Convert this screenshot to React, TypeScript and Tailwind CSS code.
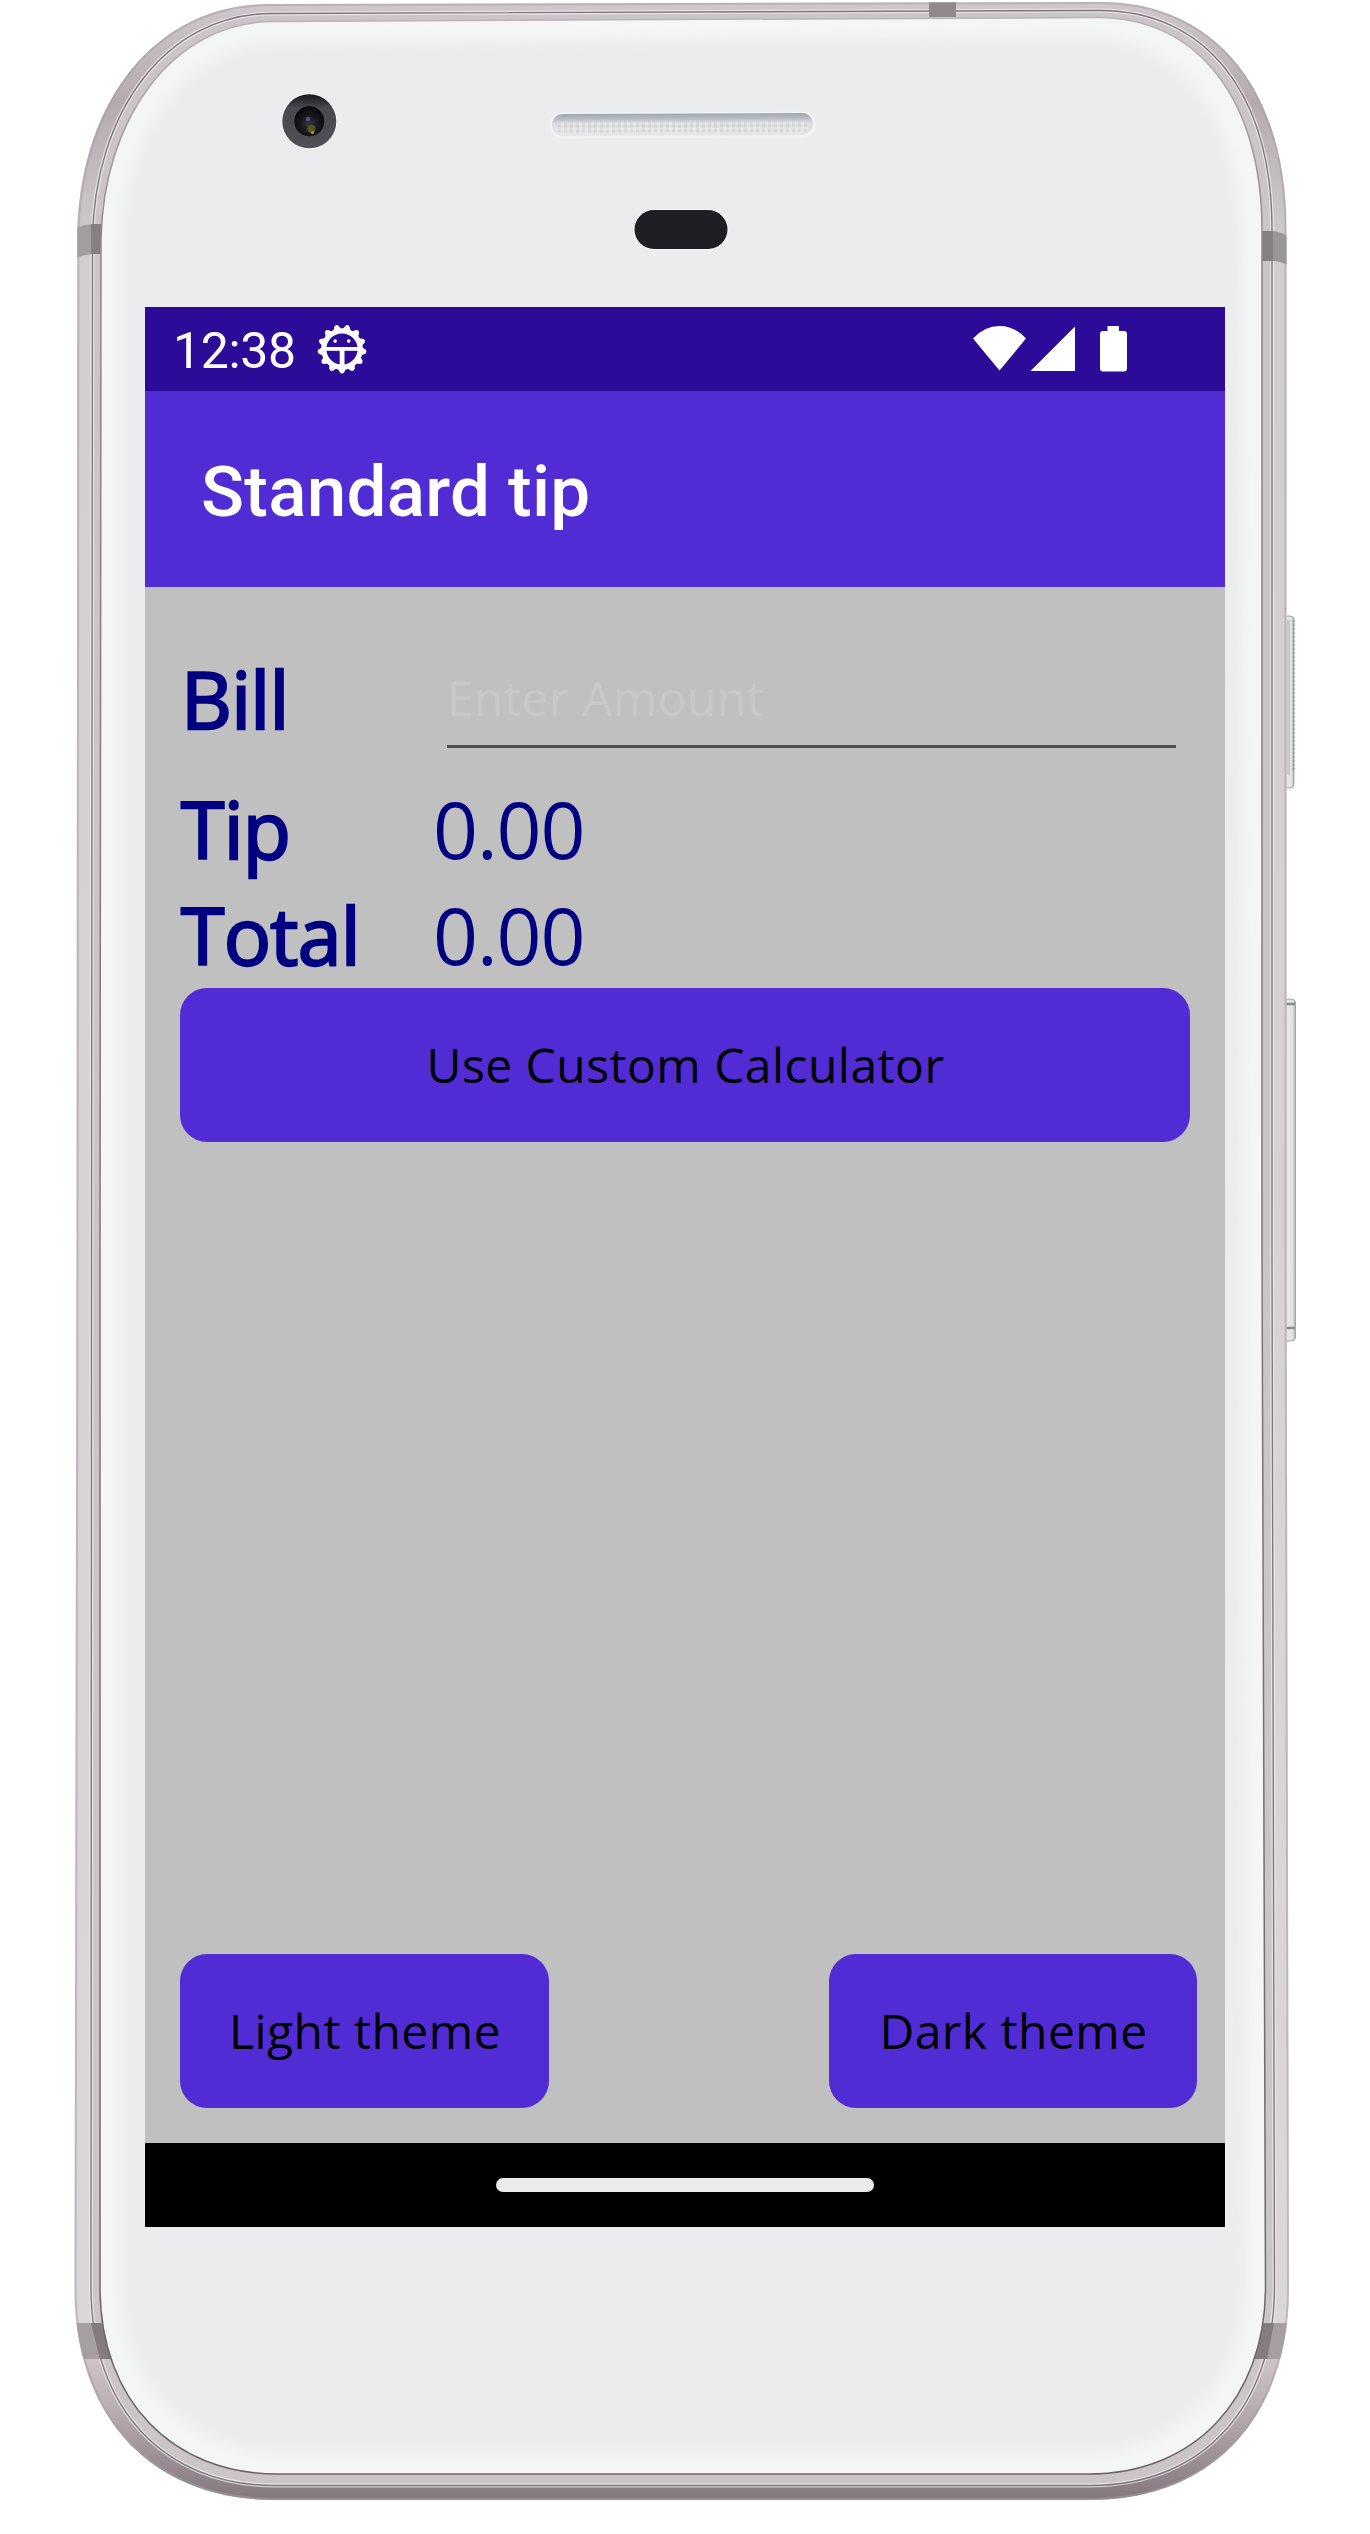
import React from "react";

const OUTER =
  "M77.3 240 C78 106 152 4 270 4 L1100 2 C1214 2 1286.5 88 1286.5 230 L1286.5 1250 L1289 2290 C1288 2416 1214 2500 1090 2500 L275 2500 C154 2500 75.5 2420 74.5 2290 L76.5 1250 Z";
const GROOVE =
  "M92.5 240 C94 112 166 13.5 272 13.5 L1100 10.5 C1206 10.5 1272 94 1272 230 L1272 1250 L1274.5 2290 C1273 2406 1204 2485.5 1090 2485.5 L275 2485.5 C164 2485.5 92 2408 91 2290 L91.5 1250 Z";
const GLASS =
  "M101 240 C103 120 172 21.5 274 21.5 L1098 17.5 C1198 17.5 1262 100 1262 230 L1262 1250 L1265.5 2290 C1264 2398 1196 2474 1088 2474 L277 2474 C172 2474 101 2400 100 2290 L100 1250 Z";
const GLASS_FLAT =
  "M120 250 C122 136 184 41 284 41 L1086 37 C1180 37 1241 116 1241 240 L1246 2290 C1243 2380 1182 2453 1082 2453 L286 2453 C188 2453 122 2384 120 2290 Z";

function PhoneBody() {
  return (
    <svg className="absolute inset-0 h-full w-full" viewBox="0 0 1370 2534" aria-hidden="true">
      <defs>
        <linearGradient id="metal" x1="0" y1="0" x2="0" y2="1">
          <stop offset="0" stopColor="#cfc8cc" />
          <stop offset="0.04" stopColor="#b3abaf" />
          <stop offset="0.1" stopColor="#d3ccd0" />
          <stop offset="0.5" stopColor="#d8d1d5" />
          <stop offset="0.93" stopColor="#dcd5d9" />
          <stop offset="0.965" stopColor="#b5abb0" />
          <stop offset="1" stopColor="#81777d" />
        </linearGradient>
        <linearGradient id="edge" x1="0" y1="0" x2="0" y2="1">
          <stop offset="0" stopColor="#bab4b7" />
          <stop offset="0.1" stopColor="#8b8488" />
          <stop offset="1" stopColor="#6b6468" />
        </linearGradient>
        <linearGradient id="keys" x1="0" y1="0" x2="1" y2="0">
          <stop offset="0" stopColor="#b9bdbb" />
          <stop offset="0.3" stopColor="#e6e9e6" />
          <stop offset="0.75" stopColor="#dfe3e0" />
          <stop offset="1" stopColor="#a9adab" />
        </linearGradient>
        <linearGradient id="grille" x1="0" y1="0" x2="0" y2="1">
          <stop offset="0" stopColor="#a2a6ae" />
          <stop offset="0.25" stopColor="#bbbec6" />
          <stop offset="0.4" stopColor="#d8dadd" />
          <stop offset="1" stopColor="#e6e7e9" />
        </linearGradient>
        <radialGradient id="lens" cx="0.5" cy="0.6" r="0.6">
          <stop offset="0" stopColor="#34353b" />
          <stop offset="0.5" stopColor="#17171c" />
          <stop offset="1" stopColor="#08080b" />
        </radialGradient>
        <linearGradient id="lensRing" x1="0" y1="0" x2="0" y2="1">
          <stop offset="0" stopColor="#16171a" />
          <stop offset="0.25" stopColor="#48494e" />
          <stop offset="1" stopColor="#505157" />
        </linearGradient>
        <filter id="soft" x="-5%" y="-5%" width="110%" height="110%">
          <feGaussianBlur stdDeviation="6" />
        </filter>
        <pattern id="dots" width="6" height="5" patternUnits="userSpaceOnUse">
          <rect width="3" height="2" fill="#c8cacd" opacity="0.6" />
          <rect x="3" y="2.5" width="3" height="2" fill="#f4f4f5" opacity="0.6" />
        </pattern>
        <clipPath id="bodyClip">
          <path d={OUTER} />
        </clipPath>
        <clipPath id="glassClip">
          <path d={GLASS} />
        </clipPath>
      </defs>

      <rect x="1284" y="616" width="10" height="172" rx="4" fill="url(#keys)" stroke="#a3a7a6" strokeWidth="1" />
      <rect x="1287" y="620" width="3" height="155" fill="#c6cbcf" />
      <path d="M1293.5 620V772" stroke="#8f9392" strokeWidth="1.5" strokeDasharray="2 2" />
      <rect x="1284" y="999" width="11.5" height="342" rx="4" fill="url(#keys)" stroke="#a3a7a6" strokeWidth="1" />
      <path d="M1286 1004h9M1286 1328h9" stroke="#8a8d8b" strokeWidth="2.5" />

      <path d={OUTER} fill="url(#metal)" />
      <g clipPath="url(#bodyClip)">
        <path d={OUTER} fill="none" stroke="#a79fa3" strokeOpacity="0.55" strokeWidth="4" />
        <path d={GROOVE} fill="#cbc5c9" stroke="#f2eef0" strokeOpacity="0.7" strokeWidth="4" />
        <path d={GROOVE} fill="none" stroke="#7f787c" strokeWidth="1.4" />
        <path d="M70 231 Q80 225 92 224 L92 254 Q80 255 70 261Z" fill="#a39ca0" />
        <rect x="91" y="224" width="11" height="30" fill="#857e83" />
        <path d="M1292 240 Q1284 232 1272 231 L1272 261 Q1284 261 1292 269Z" fill="#9b9498" />
        <rect x="1260" y="231" width="13" height="30" fill="#857e83" />
        <path d="M70 2323H92L100 2359H70Z" fill="#a69ea3" />
        <path d="M91 2323H106L114 2359H100Z" fill="#857c82" />
        <path d="M1295 2323H1273L1266 2359H1295Z" fill="#a69ea3" />
        <path d="M1274 2323H1262L1254 2359H1267Z" fill="#857c82" />
        <rect x="929" y="0" width="27" height="17" fill="#8f888c" />
      </g>
      <path d={GLASS} fill="#f4f5f6" stroke="url(#edge)" strokeWidth="1.5" />
      <g clipPath="url(#glassClip)">
        <path d={GLASS_FLAT} fill="#ebecee" filter="url(#soft)" />
      </g>

      <circle cx="309.3" cy="121.3" r="28" fill="#f7f8f8" />
      <circle cx="309.3" cy="121.3" r="27" fill="url(#lensRing)" />
      <circle cx="309.3" cy="121.3" r="15" fill="url(#lens)" />
      <circle cx="308" cy="119" r="2.2" fill="#55538a" />
      <circle cx="311.5" cy="129" r="4" fill="#55561f" />
      <circle cx="312.5" cy="132.5" r="1.6" fill="#b98b56" />

      <g transform="rotate(-0.2 682 124)">
        <rect x="549.5" y="112" width="266" height="26" rx="13" fill="#f2f3f4" />
        <rect x="552" y="113.5" width="261" height="22" rx="11" fill="url(#grille)" />
        <rect x="556" y="121" width="253" height="12" rx="6" fill="url(#dots)" />
      </g>
      <rect x="633.5" y="209" width="95" height="41" rx="20.5" fill="#f6f7f7" />
      <rect x="634.5" y="210" width="93" height="39" rx="19.5" fill="#1d1f22" />
    </svg>
  );
}

function DebugGear() {
  const teeth = Array.from({ length: 13 }, (_, i) => (i * 360) / 13);
  return (
    <svg className="h-[50px] w-[50px]" viewBox="-25 -25 50 50" fill="#fff" aria-hidden="true">
      <circle r="18.2" fill="none" stroke="#fff" strokeWidth="5.2" />
      {teeth.map((a) => (
        <path key={a} d="M-4.8 18 L-2.2 23.3 Q0 25.8 2.2 23.3 L4.8 18Z" transform={`rotate(${a})`} />
      ))}
      <rect x="-16" y="-2" width="32" height="3.8" />
      <rect x="-2.3" y="0" width="4.8" height="17" />
      <circle cx="-6.9" cy="-7.9" r="1.8" />
      <circle cx="6.7" cy="-7.9" r="1.8" />
    </svg>
  );
}

function StatusBar() {
  return (
    <div className="flex h-[84px] items-center justify-between bg-[#2c0b98] pr-[98px] pl-[28px]">
      <div className="flex items-center">
        <span className="w-[144px] font-[Roboto] text-[50px] leading-[84px] tracking-[-0.35px] whitespace-nowrap text-white">
          <span className="relative top-[2px]">12:38</span>
        </span>
        <DebugGear />
      </div>
      <svg className="h-[46px] w-[154px]" viewBox="0 0 154 46" fill="#fff" aria-hidden="true">
        <path d="M0 12.5 Q11.5 0 26.5 0 Q41.5 0 53 12.5 L26.5 44.5Z" />
        <path d="M57.5 45 L102 .5 V45Z" />
        <path d="M134.5 0h11.5v5h5q3 0 3 3v34.500q0 3-3 3h-21q-3 0-3-3v-34.500q0-3 3-3h4.500z" />
      </svg>
    </div>
  );
}

function PurpleButton({ children, className }: { children: React.ReactNode; className: string }) {
  return (
    <button
      className={`flex h-[154px] items-center justify-center rounded-[27px] bg-[#512bd4] pl-px text-[48px] leading-[64px] tracking-[0.45px] whitespace-nowrap text-black ${className}`}
    >
      {children}
    </button>
  );
}

function ResultRow({ label, value }: { label: string; value: string }) {
  return (
    <div className="flex h-[106px] items-center pl-px text-[78.75px] leading-[106px] text-[#000080]">
      <span className="w-[252px] tracking-[-0.7px] [-webkit-text-stroke:2.4px_#000080]">{label}</span>
      <span className="tracking-[-1.1px]">{value}</span>
    </div>
  );
}

export default function App() {
  return (
    <div className="relative h-[2534px] w-[1370px] overflow-hidden bg-white pt-[307px] pl-[145px]">
      <PhoneBody />
      <main className="relative flex h-[1920px] w-[1080px] flex-col bg-[#c0c0c0] font-['Open_Sans',sans-serif]">
        <StatusBar />
        <header className="flex h-[196px] items-center bg-[#512bd4] pl-[56px]">
          <h1 className="relative top-[3px] font-[Roboto] text-[71px] leading-[80px] font-medium tracking-[0.25px] whitespace-nowrap text-white">
            Standard tip
          </h1>
        </header>
        <section className="flex flex-1 flex-col pt-[35px] pr-[28px] pb-[35px] pl-[35px]">
          <div className="flex h-[154px] items-center">
            <label
              htmlFor="bill"
              className="w-[267px] pl-px text-[78.75px] leading-[106px] tracking-[-0.7px] text-[#000080] [-webkit-text-stroke:2.4px_#000080]"
            >
              Bill
            </label>
            <div className="flex h-[154px] w-[729px] flex-col pt-[28px]">
              <input
                id="bill"
                placeholder="Enter Amount"
                className="h-[98px] w-full border-b-[3px] border-[#505050] bg-transparent text-[48px] tracking-[0.45px] outline-none placeholder:text-[#c8c8c8]"
              />
            </div>
          </div>
          <ResultRow label="Tip" value="0.00" />
          <ResultRow label="Total" value="0.00" />
          <PurpleButton className="w-[1010px]">Use Custom Calculator</PurpleButton>
          <div className="mt-auto flex justify-between">
            <PurpleButton className="w-[369px]">Light theme</PurpleButton>
            <PurpleButton className="w-[368px]">Dark theme</PurpleButton>
          </div>
        </section>
        <footer className="flex h-[84px] items-center justify-center bg-black">
          <div className="h-[14px] w-[378px] rounded-[7px] bg-[#ebebeb]" />
        </footer>
      </main>
    </div>
  );
}
